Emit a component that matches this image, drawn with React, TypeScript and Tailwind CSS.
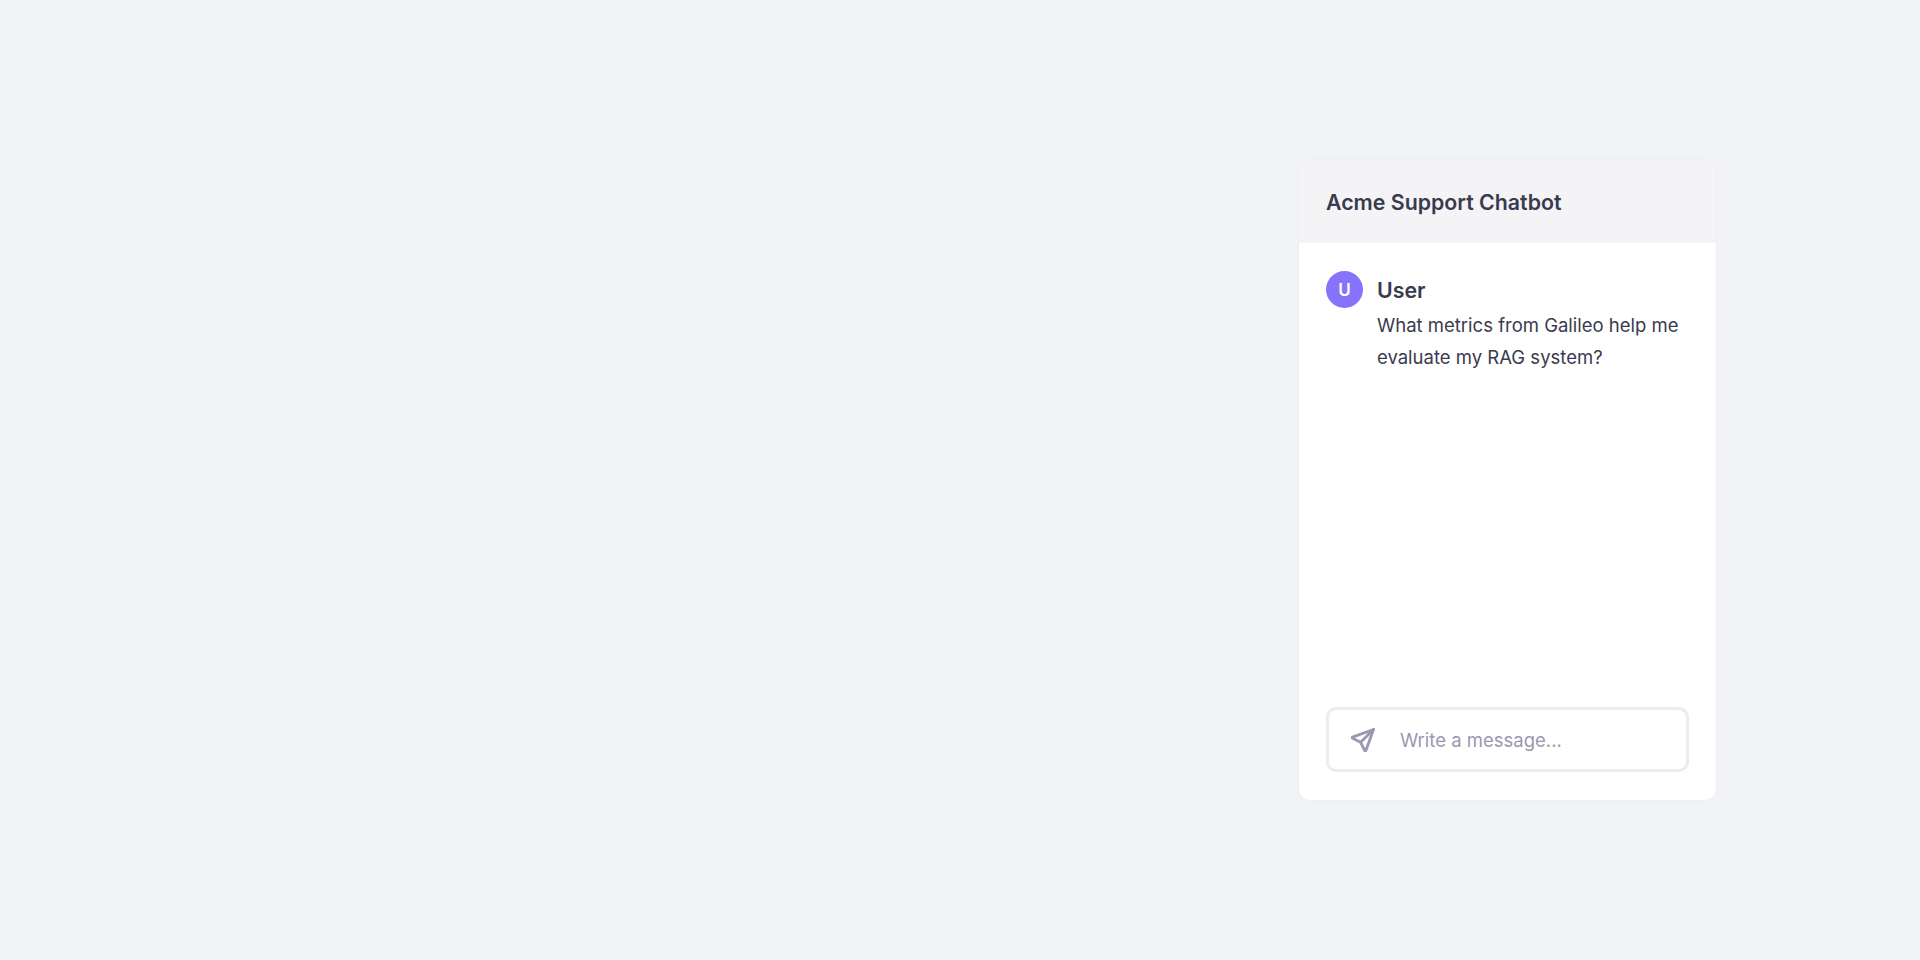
function SendIcon({ className }: { className?: string }) {
  return (
    <svg
      viewBox="0 0 24 24"
      fill="none"
      stroke="currentColor"
      strokeWidth="2.4"
      strokeLinecap="round"
      strokeLinejoin="round"
      className={className}
      aria-hidden="true"
    >
      <path d="M10 14l11 -11" />
      <path d="M21 3l-6.5 18a.55 .55 0 0 1 -1 0l-3.5 -7l-7 -3.5a.55 .55 0 0 1 0 -1l18 -6.5" />
    </svg>
  );
}

export default function App() {
  return (
    <div className="min-h-[960px] bg-[#f1f3f7] pl-[1298px] pt-[159px] font-['Inter',sans-serif] text-[#3a3a4e]">
      <div className="flex h-[642px] w-[419px] flex-col overflow-hidden rounded-xl border border-[#eeeff3] bg-white">
        <div className="flex h-[83px] shrink-0 items-center bg-[#f4f4f7] px-[27px] pt-[2px]">
          <h2 className="text-[21.33px] font-semibold">Acme Support Chatbot</h2>
        </div>
        <div className="flex flex-1 flex-col justify-between px-[27px] pb-[28px] pt-[28px]">
          <div className="flex gap-[14px]">
            <div className="flex h-[37px] w-[37px] shrink-0 items-center justify-center rounded-full bg-[#8672fb] pt-[2px] text-[17px] font-semibold text-white">
              U
            </div>
            <div>
              <div className="text-[21.33px] font-semibold leading-[38px]">User</div>
              <p className="text-[18.5px] leading-[32.4px]">What metrics from Galileo help me evaluate my RAG system?</p>
            </div>
          </div>
          <div className="flex h-[65px] items-center rounded-[10px] border-[3px] border-[#ebebf0] pl-[20px]">
            <SendIcon className="h-[28px] w-[28px] text-[#9a98b0]" />
            <span className="ml-[23px] pt-[3px] text-[18.5px] text-[#9a98b0]">Write a message...</span>
          </div>
        </div>
      </div>
    </div>
  );
}
